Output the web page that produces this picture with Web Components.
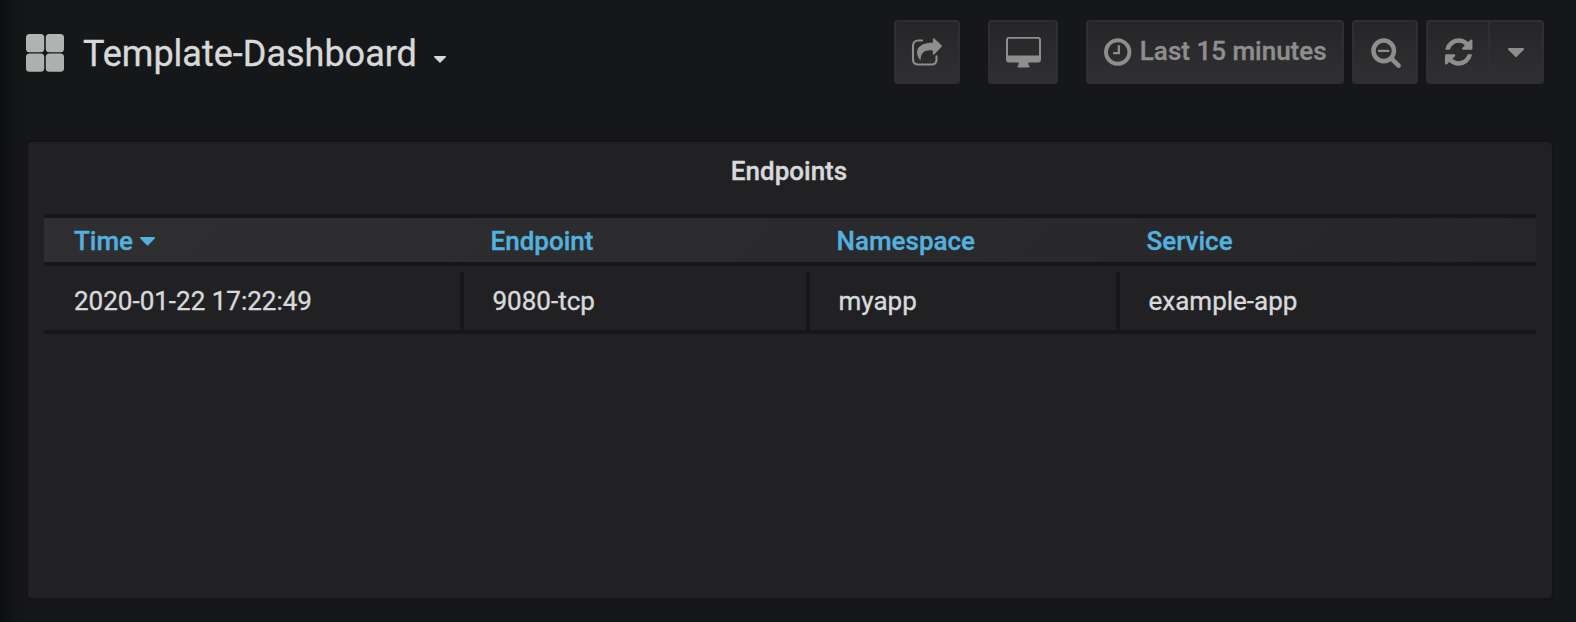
<!DOCTYPE html>
<html lang="en">
<head>
<meta charset="utf-8">
<title>Template-Dashboard</title>
<style>
html,body{margin:0;height:100%;background:#161719;overflow:hidden}
body{font-family:Roboto,sans-serif;font-size:26px;color:#d8d9da;-webkit-text-stroke:.35px currentColor}
</style>
</head>
<body>
<dash-page>
  <dash-navbar slot="nav" heading="Template-Dashboard">
    <nav-button style="width:66px;margin-right:28px"><ui-icon name="share"></ui-icon></nav-button>
    <nav-button style="width:70px;margin-right:28px"><ui-icon name="monitor"></ui-icon></nav-button>
    <nav-button style="width:258px;margin-right:8px;padding-left:1px"><ui-icon name="clock"></ui-icon><span style="margin-bottom:2px">Last 15 minutes</span></nav-button>
    <nav-button style="width:66px;margin-right:8px;padding-left:2px"><ui-icon name="zoomout"></ui-icon></nav-button>
    <nav-button joined="left" style="width:62px;padding-left:2px"><ui-icon name="refresh"></ui-icon></nav-button>
    <nav-button joined="right" style="width:56px"><ui-icon name="caret"></ui-icon></nav-button>
  </dash-navbar>
  <dash-panel heading="Endpoints"><data-table></data-table></dash-panel>
</dash-page>
<script>
const ICONS = {
  share: [30, 28, '0 0 30 28', '<path d="M10 2.500H6.500Q1 2.500 1 8V21.500Q1 26.500 6.500 26.500H19.500Q24.500 26.500 24.500 21.500V18.400" fill="none" stroke="currentColor" stroke-width="2.100" stroke-linecap="round"/><path d="M21 .4Q21.300-.2 22.300.6L29.600 7.300Q30.300 8 29.600 8.800L22.400 16.300Q21 17.300 20.800 16V12.400C13.500 11.500 8.500 14 8.600 22.600C1.500 14 5 4.600 20.800 4.800Z"/>'],
  monitor: [35, 31, '0 0 35 31', '<path fill-rule="evenodd" d="M3 0H32Q35 0 35 3V22.500Q35 25.500 32 25.500H22.300Q22.300 28.500 23.400 29Q23.800 30.500 22.700 30.500H12.300Q11.200 30.500 11.600 29Q12.700 28.500 12.700 25.500H3Q0 25.500 0 22.500V3Q0 0 3 0ZM3 1.800Q2 1.800 2 2.800V18.600H33V2.800Q33 1.800 32 1.800Z"/>'],
  clock: [27.430, 32, '0 0 1536 1792', '<path d="M896 544v448q0 14-9 23t-23 9h-320q-14 0-23-9t-9-23v-64q0-14 9-23t23-9h224v-352q0-14 9-23t23-9h64q14 0 23 9t9 23zm416 352q0-148-73-273t-198-198-273-73-273 73-198 198-73 273 73 273 198 198 273 73 273-73 198-198 73-273zm224 0q0 209-103 385.500t-279.500 279.500-385.500 103-385.500-103-279.500-279.500-103-385.500 103-385.500 279.500-279.500 385.500-103 385.500 103 279.500 279.500 103 385.500z"/>'],
  zoomout: [32, 32, '0 0 1792 1792', '<path d="M1088 800v64q0 13-9.500 22.500t-22.500 9.500h-576q-13 0-22.500-9.500t-9.500-22.500v-64q0-13 9.500-22.500t22.500-9.500h576q13 0 22.500 9.500t9.500 22.500zm128 32q0-185-131.500-316.500t-316.500-131.500-316.500 131.500-131.500 316.500 131.500 316.500 316.500 131.500 316.500-131.500 131.500-316.500zm512 832q0 53-37.500 90.500t-90.500 37.500q-54 0-90-38l-343-342q-179 124-399 124-143 0-273.500-55.500t-225-150-150-225-55.500-273.500 55.500-273.500 150-225 225-150 273.500-55.500 273.500 55.500 225 150 150 225 55.500 273.500q0 220-124 399l343 343q37 37 37 90z"/>'],
  refresh: [27.430, 32, '0 0 1536 1792', '<path d="M1511 1056q0 5-1 7-64 268-268 434.500t-478 166.500q-146 0-282.500-55t-243.500-157l-129 129q-19 19-45 19t-45-19-19-45v-448q0-26 19-45t45-19h448q26 0 45 19t19 45-19 45l-137 137q71 66 161 102t187 36q134 0 250-65t186-179q11-17 53-117 8-23 30-23h192q13 0 22.500 9.500t9.500 22.500zm25-800v448q0 26-19 45t-45 19h-448q-26 0-45-19t-19-45 19-45l138-138q-148-137-349-137-134 0-250 65t-186 179q-11 17-53 117-8 23-30 23h-199q-13 0-22.500-9.500t-9.500-22.500v-7q65-268 270-434.500t480-166.500q146 0 284 55.500t245 156.500l130-129q19-19 45-19t45 19 19 45z"/>'],
  caret: [16, 9, '0 640 1024 576', '<path d="M1024 704q0 26-19 45l-448 448q-19 19-45 19t-45-19l-448-448q-19-19-19-45t19-45 45-19h896q26 0 45 19t19 45z"/>'],
  grid: [38, 38, '0 0 38 38', '<defs><linearGradient id="g" x1="0" x2="0" y1="0" y2="38" gradientUnits="userSpaceOnUse"><stop offset="0" stop-color="#b3b5b4"/><stop offset="1" stop-color="#adafae"/></linearGradient></defs><g fill="url(#g)"><rect width="18.200" height="18.200" rx="3.500"/><rect x="19.800" width="18.200" height="18.200" rx="3.500"/><rect y="19.600" width="18.200" height="18.200" rx="3.500"/><rect x="19.800" y="19.600" width="18.200" height="18.200" rx="3.500"/></g>']
};
const define = (name, render) => customElements.define(name, class extends HTMLElement {
  connectedCallback() {
    if (!this.shadowRoot) this.attachShadow({mode: 'open'}).innerHTML = render(this);
  }
});
define('ui-icon', el => {
  const [w, h, box, body] = ICONS[el.getAttribute('name')];
  return `<style>:host{display:block;flex:none}svg{display:block;width:var(--icon-w,${w}px);height:var(--icon-h,${h}px);overflow:visible}</style><svg viewBox="${box}" fill="currentColor" preserveAspectRatio="none">${body}</svg>`;
});
define('nav-button', () => `<style>
:host{display:flex;box-sizing:border-box;height:64px;align-items:center;justify-content:center;gap:8px;border:2px solid #2f2f32;border-radius:4px;background:linear-gradient(#262628,#303032);color:#8e8e8e;font-weight:500;line-height:30px;white-space:nowrap;text-shadow:0 1px 0 rgba(0,0,0,.1)}
:host([joined=left]){border-radius:4px 0 0 4px;border-right:0}
:host([joined=right]){border-radius:0 4px 4px 0}
</style><slot></slot>`);
define('dash-navbar', el => `<style>
:host{display:flex;box-sizing:border-box;height:104px;padding:20px 32px 0 26px;align-items:flex-start}
.title{display:flex;align-items:center;height:64px;flex:1}
.title ui-icon{margin-top:2px}
h1{margin:3px 0 0 19px;font-size:36px;font-weight:400;line-height:48px;color:#d8d9da}
.title .caret{--icon-w:12px;--icon-h:6.700px;margin:14px 0 0 17px}
</style><div class="title"><ui-icon name="grid"></ui-icon><h1>${el.getAttribute('heading')}</h1><ui-icon class="caret" name="caret"></ui-icon></div><slot></slot>`);
define('dash-panel', el => `<style>
:host{display:block;box-sizing:border-box;margin:36px 22px 0 26px;height:460px;border:2px solid #141414;border-radius:6px;background:#212124;padding:0 16px}
h2{margin:0;height:72px;box-sizing:border-box;padding:14px 2px 0 0;font-size:26px;font-weight:500;line-height:30px;text-align:center}
</style><h2>${el.getAttribute('heading')}</h2><slot></slot>`);
define('data-table', () => `<style>
:host{display:block}
.row{display:grid;grid-template-columns:416px 346px 310px 1fr}
.head{box-sizing:border-box;height:52px;border-block:4px solid #161719;background:linear-gradient(135deg,#2f2f32,#262628);color:#53b1df;font-weight:500;line-height:44px}
.head>div{display:flex;align-items:center;padding:2px 0 0 30.500px;height:44px;box-sizing:border-box}
.head>div:first-child{padding-left:30px}
.head ui-icon{--icon-w:15px;--icon-h:8.500px;margin:1px 0 0 6.500px}
.body{padding-top:6px;border-bottom:4px solid #161719;line-height:58px;height:58px}
.body>div{height:58px;box-sizing:border-box;padding-left:28.500px;border-left:4px solid #161719}
.body>div:first-child{padding-left:30px;border:0}
</style>
<div class="row head"><div>Time<ui-icon name="caret"></ui-icon></div><div>Endpoint</div><div>Namespace</div><div>Service</div></div>
<div class="row body"><div>2020-01-22 17:22:49</div><div>9080-tcp</div><div>myapp</div><div>example-app</div></div>`);
define('dash-page', () => `<style>
:host{display:block;height:622px;background:linear-gradient(90deg,#0d0e0f 0,#121315 10px,#161719 28px)}
</style><slot name="nav"></slot><slot></slot>`);
</script>
</body>
</html>
